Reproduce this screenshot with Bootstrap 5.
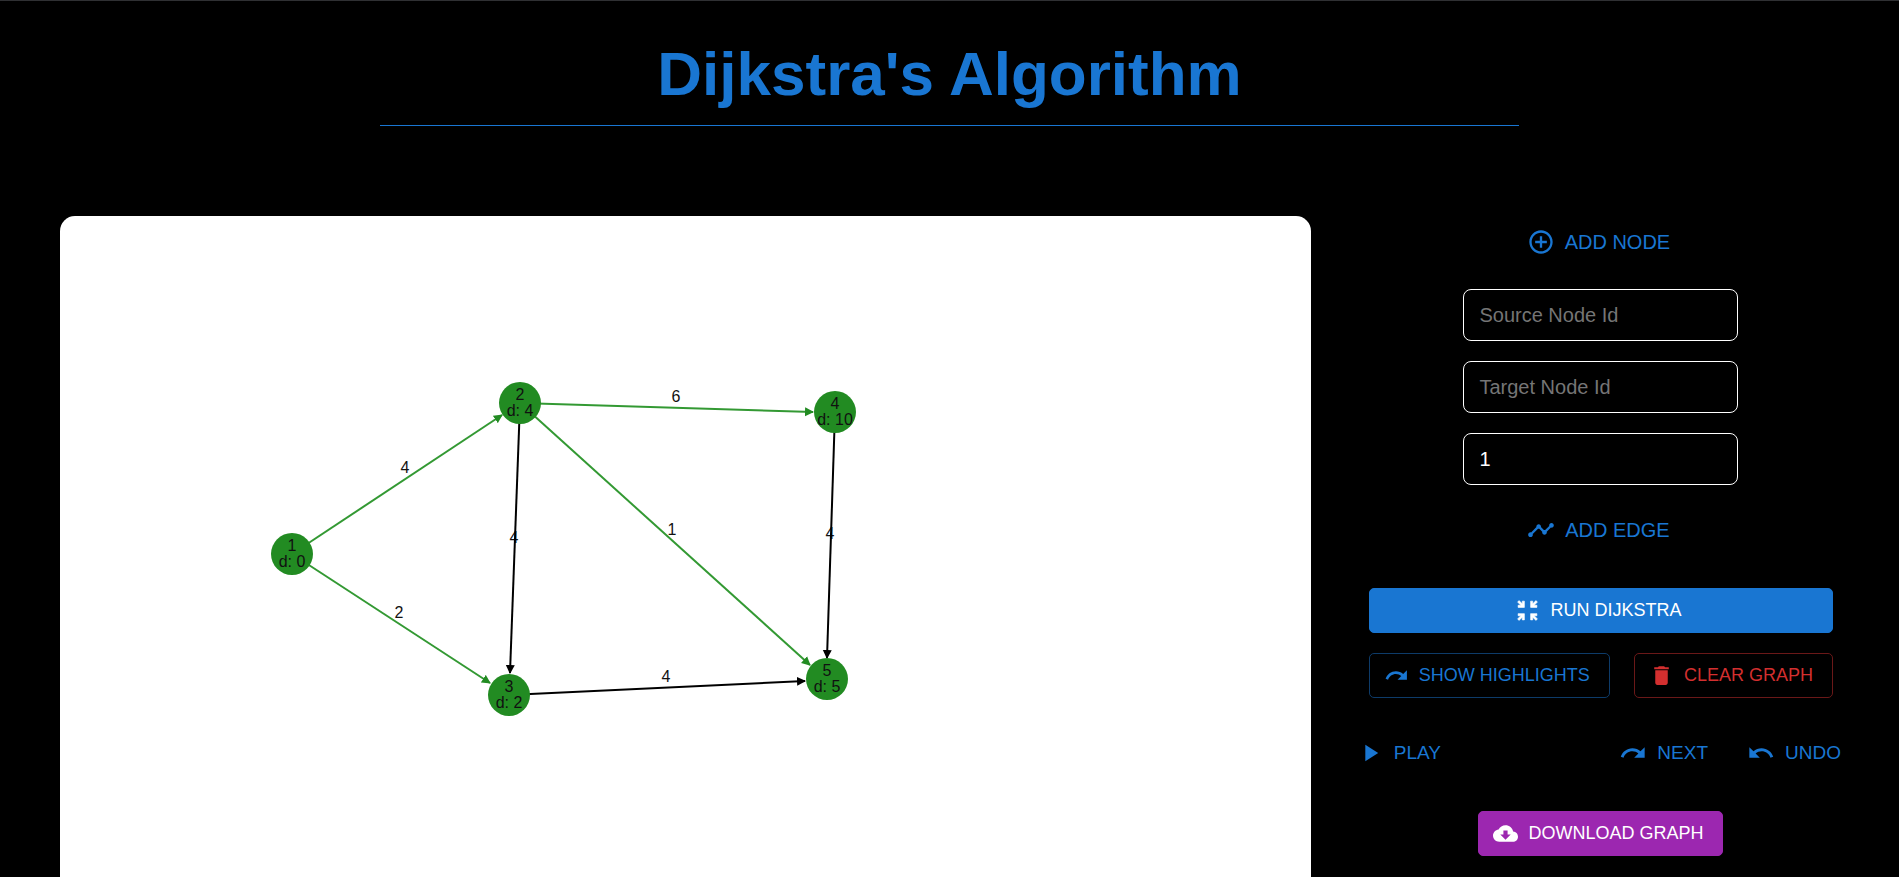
<!DOCTYPE html>
<html lang="en">
<head>
<meta charset="utf-8">
<meta name="viewport" content="width=device-width, initial-scale=1">
<title>Dijkstra's Algorithm</title>
<link href="https://cdn.jsdelivr.net/npm/bootstrap@5.3.0/dist/css/bootstrap.min.css" rel="stylesheet">
<style>
  body { background: #000; color: #fff; font-family: "Liberation Sans", Arial, sans-serif; border-top: 1px solid #2f3033; }
  .page-title { width: 60%; padding: 31px 0 10px; border-bottom: 1px solid #1976d2; color: #1976d2; font-size: 62px; line-height: 83px; font-weight: 700; }
  .workspace { display: grid; grid-template-columns: 32fr 13fr; column-gap: 36px; padding: 0 44px 0 60px; margin-top: 90px; }
  .graph-panel { border-radius: 15px 15px 0 0; background: #fff; }
  .graph-panel text { font-size: 16px; text-anchor: middle; fill: #111; }
  .graph-panel circle { fill: #228b22; }
  .edge-line { stroke: #000; stroke-width: 2; }
  .edge-line.path-edge { stroke: #339933; }
  .side-tools { padding-bottom: 20px; }
  .fields, .run-rows { gap: 20px; }
  .fields { margin: 21px 0 19px; }
  .run-rows { margin: 32px 0 29px; padding: 0 22px; }
  .step-row { margin-bottom: 32px; }
  .btn { display: inline-flex; align-items: center; justify-content: center; gap: 10px; white-space: nowrap; text-transform: uppercase; border-radius: 5px; font-size: 18px; line-height: 25px; padding: 9px 19px 9px 14px; }
  .btn svg { width: 25px; height: 25px; fill: currentColor; flex: none; }
  .btn-plain { color: #1976d2; border: 0; font-size: 20px; line-height: 28px; padding: 12px 14px 12px 9px; }
  .btn-plain svg { width: 28px; height: 28px; }
  .btn-plain:hover { color: #4a9aea; }
  .step-row .btn-plain { font-size: 19px; }
  .btn-run { --bs-btn-bg: #1976d2; --bs-btn-border-color: #1976d2; --bs-btn-color: #fff; --bs-btn-hover-bg: #1565c0; --bs-btn-hover-color: #fff; }
  .btn-run svg { stroke: currentColor; stroke-width: .6; }
  .btn-show { --bs-btn-color: #1976d2; --bs-btn-border-color: #0d3b69; --bs-btn-hover-color: #1976d2; --bs-btn-hover-border-color: #1976d2; }
  .btn-clear { --bs-btn-color: #d32f2f; --bs-btn-border-color: #6a1818; --bs-btn-hover-color: #d32f2f; --bs-btn-hover-border-color: #d32f2f; }
  .btn-download { --bs-btn-bg: #9c27b0; --bs-btn-border-color: #9c27b0; --bs-btn-color: #fff; --bs-btn-hover-bg: #7b1fa2; --bs-btn-hover-color: #fff; }
  .node-field, .node-field:focus { width: 275px; height: 52px; background: #000; color: #fff; border: 1px solid #fff; border-radius: 8px; font-size: 20px; padding: 0 15px; }
  .node-field::placeholder { color: #757575; }
</style>
</head>
<body class="d-flex flex-column min-vh-100">
<header class="d-flex justify-content-center">
  <h1 class="page-title text-center mb-0">Dijkstra's Algorithm</h1>
</header>
<main class="workspace flex-grow-1">
  <section class="graph-panel overflow-hidden d-flex" aria-label="Graph">
    <svg class="flex-grow-1" width="100%" height="100%" role="img" aria-label="Weighted directed graph">
      <defs>
        <marker id="tipGreen" markerUnits="userSpaceOnUse" markerWidth="9" markerHeight="10" refX="8" refY="5" orient="auto"><path d="M0 .5 9 5 0 9.500z" fill="#228b22"/></marker>
        <marker id="tipBlack" markerUnits="userSpaceOnUse" markerWidth="9" markerHeight="10" refX="8" refY="5" orient="auto"><path d="M0 .5 9 5 0 9.500z"/></marker>
      </defs>
      <text x="345" y="257">4</text>
      <text x="339" y="402">2</text>
      <text x="454" y="327">4</text>
      <text x="616" y="186">6</text>
      <text x="612" y="319">1</text>
      <text x="770" y="323">4</text>
      <text x="606" y="466">4</text>
      <line class="edge-line path-edge" x1="232" y1="338" x2="442" y2="199" marker-end="url(#tipGreen)"/>
      <line class="edge-line path-edge" x1="232" y1="338" x2="430" y2="467" marker-end="url(#tipGreen)"/>
      <line class="edge-line path-edge" x1="460" y1="187" x2="753" y2="196" marker-end="url(#tipGreen)"/>
      <line class="edge-line path-edge" x1="460" y1="187" x2="750" y2="449" marker-end="url(#tipGreen)"/>
      <line class="edge-line" x1="460" y1="187" x2="450" y2="457" marker-end="url(#tipBlack)"/>
      <line class="edge-line" x1="449" y1="479" x2="745" y2="465" marker-end="url(#tipBlack)"/>
      <line class="edge-line" x1="775" y1="196" x2="767" y2="442" marker-end="url(#tipBlack)"/>
      <circle cx="232" cy="338" r="21"/><circle cx="460" cy="187" r="21"/><circle cx="449" cy="479" r="21"/><circle cx="775" cy="196" r="21"/><circle cx="767" cy="463" r="21"/>
      <text x="232" y="335">1</text><text x="232" y="351">d: 0</text>
      <text x="460" y="184">2</text><text x="460" y="200">d: 4</text>
      <text x="449" y="476">3</text><text x="449" y="492">d: 2</text>
      <text x="775" y="193">4</text><text x="775" y="209">d: 10</text>
      <text x="767" y="460">5</text><text x="767" y="476">d: 5</text>
    </svg>
  </section>
  <aside class="side-tools d-flex flex-column" aria-label="Graph controls">
    <form class="d-flex flex-column align-items-center">
      <button type="button" class="btn btn-plain"><svg viewBox="0 0 24 24" aria-hidden="true"><path d="M13 7h-2v4H7v2h4v4h2v-4h4v-2h-4V7zm-1-5C6.480 2 2 6.480 2 12s4.480 10 10 10 10-4.480 10-10S17.520 2 12 2zm0 18c-4.410 0-8-3.590-8-8s3.590-8 8-8 8 3.590 8 8-3.590 8-8 8z"/></svg>Add Node</button>
      <div class="d-flex flex-column fields">
        <input class="form-control node-field" type="text" placeholder="Source Node Id" aria-label="Source Node Id">
        <input class="form-control node-field" type="text" placeholder="Target Node Id" aria-label="Target Node Id">
        <input class="form-control node-field" type="text" value="1" aria-label="Weight">
      </div>
      <button type="button" class="btn btn-plain"><svg viewBox="0 0 24 24" aria-hidden="true"><path d="M23 8c0 1.100-.9 2-2 2-.18 0-.35-.02-.51-.07l-3.560 3.550c.05.16.07.34.07.52 0 1.100-.9 2-2 2s-2-.9-2-2c0-.18.02-.36.07-.52l-2.550-2.550c-.16.05-.34.07-.52.07s-.36-.02-.52-.07l-4.550 4.560c.05.16.07.33.07.51 0 1.100-.9 2-2 2s-2-.9-2-2 .9-2 2-2c.18 0 .35.02.51.07l4.560-4.550C8.020 9.360 8 9.180 8 9c0-1.100.9-2 2-2s2 .9 2 2c0 .18-.02.36-.07.52l2.550 2.550c.16-.05.34-.07.52-.07s.36.02.52.07l3.550-3.560C19.020 8.350 19 8.180 19 8c0-1.100.9-2 2-2s2 .9 2 2z"/></svg>Add Edge</button>
    </form>
    <div class="d-flex flex-column run-rows">
      <button type="button" class="btn btn-run"><svg viewBox="0 0 24 24" aria-hidden="true"><path d="M9 9V3H7v2.590L3.910 2.500 2.500 3.910 5.590 7H3v2h6zm12 0V7h-2.590l3.090-3.090-1.410-1.410L17 5.590V3h-2v6h6zM3 15v2h2.590L2.500 20.090l1.410 1.410L7 18.410V21h2v-6H3zm12 0v6h2v-2.590l3.090 3.090 1.410-1.410L18.410 17H21v-2h-6z"/></svg>Run Dijkstra</button>
      <div class="d-flex justify-content-between">
        <button type="button" class="btn btn-show"><svg viewBox="0 0 24 24" aria-hidden="true"><path d="M18.400 10.600C16.550 8.990 14.150 8 11.500 8c-4.650 0-8.580 3.030-9.960 7.220L3.900 16c1.050-3.190 4.050-5.500 7.600-5.500 1.950 0 3.730.72 5.120 1.880L13 16h9V7l-3.600 3.600z"/></svg>Show Highlights</button>
        <button type="button" class="btn btn-clear"><svg viewBox="0 0 24 24" aria-hidden="true"><path d="M6 19c0 1.100.9 2 2 2h8c1.100 0 2-.9 2-2V7H6v12zM19 4h-3.500l-1-1h-5l-1 1H5v2h14V4z"/></svg>Clear Graph</button>
      </div>
    </div>
    <div class="d-flex step-row">
      <button type="button" class="btn btn-plain me-auto"><svg viewBox="0 0 24 24" aria-hidden="true"><path d="M8 5v14l11-7z"/></svg>Play</button>
      <button type="button" class="btn btn-plain me-3"><svg viewBox="0 0 24 24" aria-hidden="true"><path d="M18.400 10.600C16.550 8.990 14.150 8 11.500 8c-4.650 0-8.580 3.030-9.960 7.220L3.900 16c1.050-3.190 4.050-5.500 7.600-5.500 1.950 0 3.730.72 5.120 1.880L13 16h9V7l-3.600 3.600z"/></svg>Next</button>
      <button type="button" class="btn btn-plain"><svg viewBox="0 0 24 24" aria-hidden="true"><path d="M12.500 8c-2.650 0-5.050.99-6.900 2.600L2 7v9h9l-3.620-3.620c1.390-1.160 3.160-1.880 5.120-1.880 3.540 0 6.550 2.310 7.600 5.500l2.370-.78C21.080 11.030 17.150 8 12.500 8z"/></svg>Undo</button>
    </div>
    <button type="button" class="btn btn-download align-self-center"><svg viewBox="0 0 24 24" aria-hidden="true"><path d="M19.350 10.040C18.670 6.590 15.640 4 12 4 9.110 4 6.600 5.640 5.350 8.040 2.340 8.360 0 10.910 0 14c0 3.310 2.690 6 6 6h13c2.760 0 5-2.240 5-5 0-2.640-2.050-4.780-4.650-4.960zM17 13l-5 5-5-5h3V9h4v4h3z"/></svg>Download Graph</button>
  </aside>
</main>
<script src="https://cdn.jsdelivr.net/npm/bootstrap@5.3.0/dist/js/bootstrap.bundle.min.js"></script>
</body>
</html>
